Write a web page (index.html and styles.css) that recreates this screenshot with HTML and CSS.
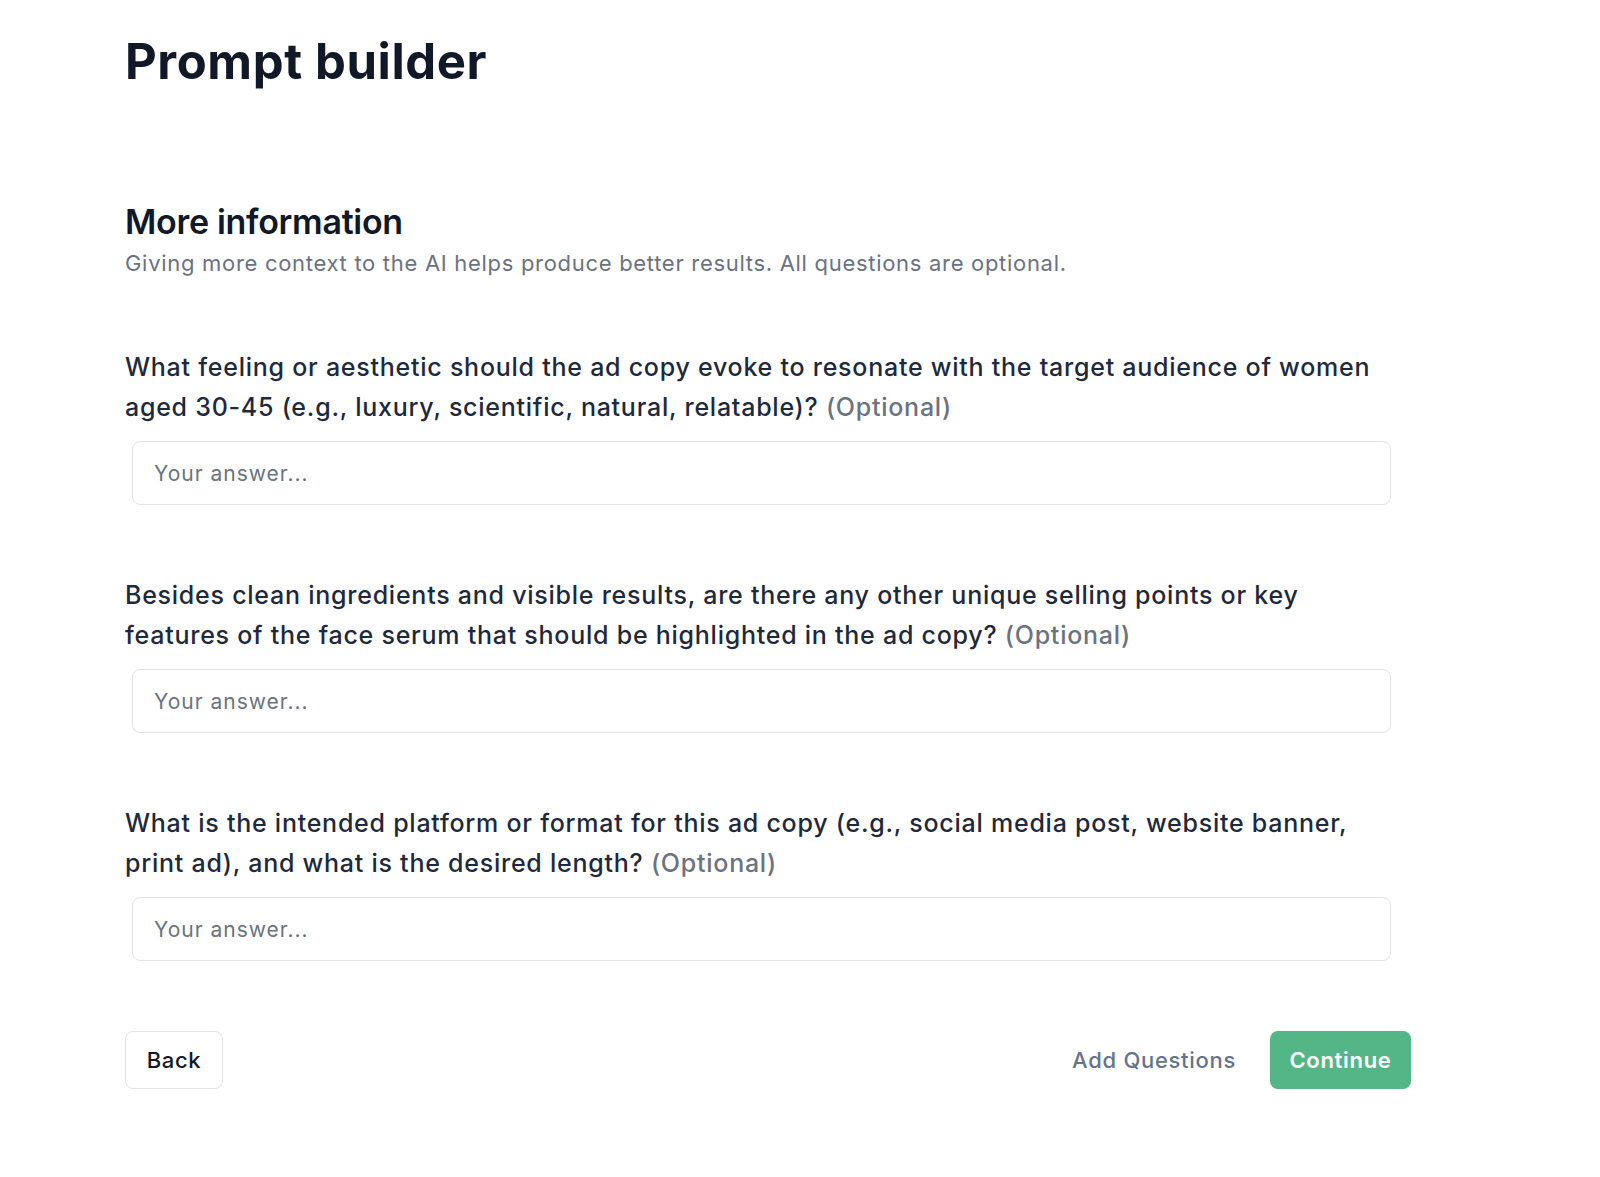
FILE: index.html
```html
<!DOCTYPE html>
<html lang="en">
<head>
<meta charset="utf-8">
<title>Prompt builder</title>
<link rel="stylesheet" href="styles.css">
</head>
<body>
<main class="page">
  <h1 class="title">Prompt builder</h1>
  <section class="intro">
    <h2 class="intro-title">More information</h2>
    <p class="intro-text">Giving more context to the AI helps produce better results. All questions are optional.</p>
  </section>
  <div class="question">
    <label class="q-label">What feeling or aesthetic should the ad copy evoke to resonate with the target audience of women aged 30-45 (e.g., luxury, scientific, natural, relatable)? <span class="opt">(Optional)</span></label>
    <input class="answer" type="text" placeholder="Your answer...">
  </div>
  <div class="question">
    <label class="q-label">Besides clean ingredients and visible results, are there any other unique selling points or key features of the face serum that should be highlighted in the ad copy? <span class="opt">(Optional)</span></label>
    <input class="answer" type="text" placeholder="Your answer...">
  </div>
  <div class="question">
    <label class="q-label">What is the intended platform or format for this ad copy (e.g., social media post, website banner, print ad), and what is the desired length? <span class="opt">(Optional)</span></label>
    <input class="answer" type="text" placeholder="Your answer...">
  </div>
  <div class="actions">
    <button class="btn btn-back" type="button">Back</button>
    <div class="actions-right">
      <button class="btn btn-link" type="button">Add Questions</button>
      <button class="btn btn-primary" type="button">Continue</button>
    </div>
  </div>
</main>
</body>
</html>
```
FILE: styles.css
```css
* { box-sizing: border-box; }
html, body { margin: 0; padding: 0; background: #ffffff; }
body {
  font-family: Inter, "Noto Sans", "Liberation Sans", sans-serif;
  color: #1e293b;
}
.page {
  width: 1286px;
  margin-left: 125px;
  padding-top: 32px;
}
.title {
  margin: 0;
  font-size: 49px;
  line-height: 60px;
  font-weight: 700;
  color: #111827;
  letter-spacing: 0.6px;
}
.intro { margin-top: 110px; }
.intro-title {
  margin: 0;
  font-size: 34px;
  line-height: 40px;
  font-weight: 600;
  color: #111827;
  letter-spacing: -0.3px;
}
.intro-text {
  margin: 7px 0 0;
  font-size: 22px;
  line-height: 28px;
  color: #6b7280;
  letter-spacing: 0.7px;
}
.question {
  margin-top: 70px;
  display: flex;
  flex-direction: column;
}
.q-label {
  font-size: 25px;
  line-height: 40px;
  font-weight: 500;
  color: #1e293b;
  letter-spacing: 0.75px;
  width: 1272px;
}
.opt { color: #6b7280; }
.answer {
  margin: 14px 0 0 7px;
  width: 1259px;
  height: 64px;
  border: 1.5px solid #e2e4e8;
  border-radius: 8px;
  padding: 0 21px;
  font-family: inherit;
  font-size: 21px;
  letter-spacing: 1px;
  color: #1e293b;
  background: #fff;
  outline: none;
}
.answer::placeholder { color: #6b7280; }
.actions {
  margin-top: 70px;
  display: flex;
  justify-content: space-between;
  align-items: center;
}
.actions-right {
  display: flex;
  align-items: center;
  gap: 18px;
}
.btn {
  font-family: inherit;
  font-size: 22px;
  font-weight: 500;
  height: 58px;
  border-radius: 8px;
  letter-spacing: 0.7px;
  cursor: pointer;
}
.btn-back {
  width: 98px;
  background: #fff;
  border: 1.5px solid #e2e4e8;
  color: #111827;
}
.btn-link {
  background: none;
  border: none;
  color: #64748b;
  padding: 0 16px;
}
.btn-primary {
  width: 141px;
  background: #54b686;
  border: none;
  color: #fff;
  font-weight: 600;
}
```
